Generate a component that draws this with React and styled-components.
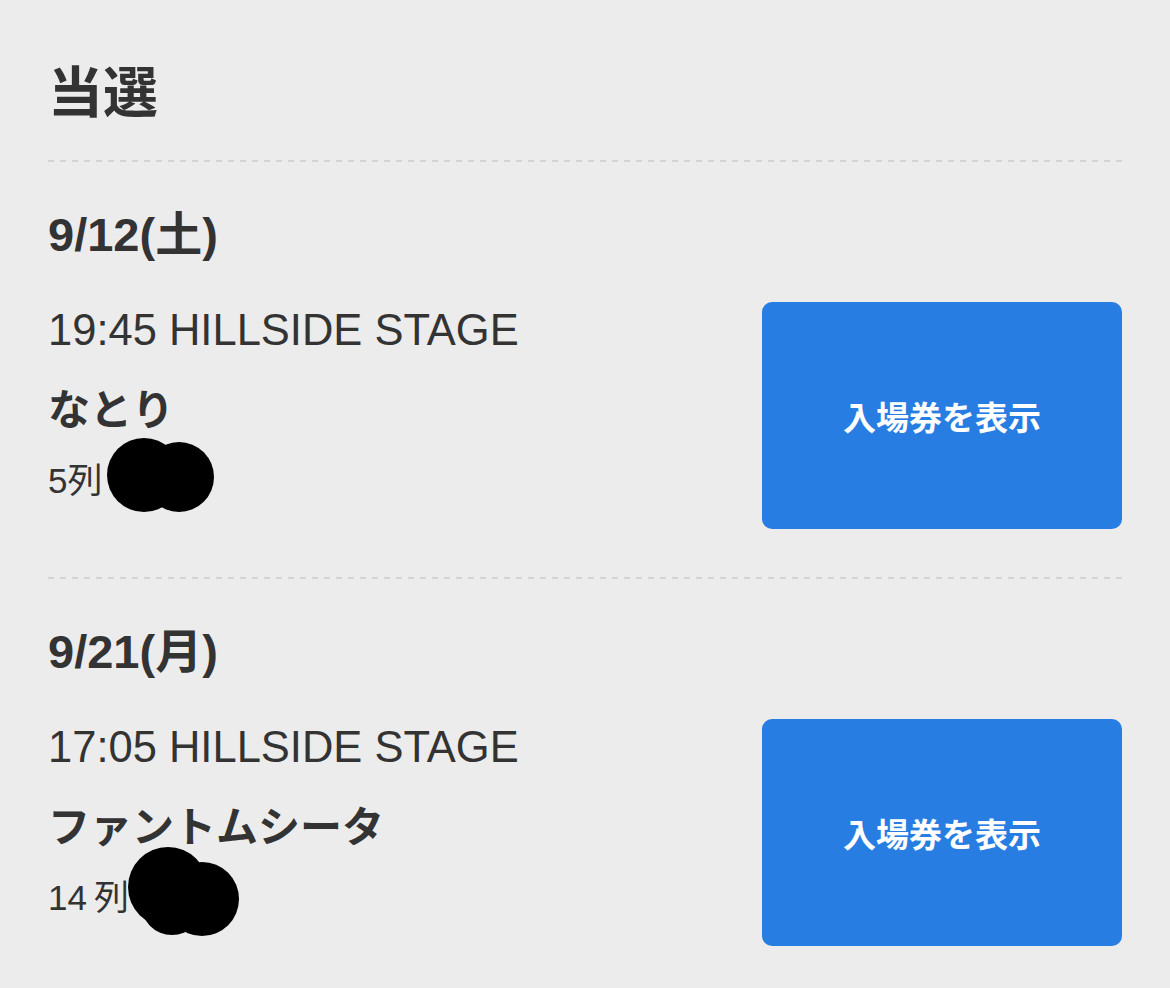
import React from "react";
import styled, { createGlobalStyle } from "styled-components";

const GlobalStyle = createGlobalStyle`
  html, body {
    margin: 0;
    padding: 0;
    background: #ececec;
  }
  body {
    font-family: "Liberation Sans", "Noto Sans CJK JP", sans-serif;
    color: #333333;
  }
`

const Page = styled.main`
  padding: 58px 48px 0;
  min-height: 988px;
  box-sizing: border-box;
`

const Title = styled.h1`
  margin: 0 0 42px;
  font-family: "Noto Sans CJK JP", sans-serif;
  font-size: 55px;
  line-height: 60px;
  font-weight: 700;
`

const Divider = styled.hr`
  margin: 0;
  border: 0;
  height: 2px;
  background: repeating-linear-gradient(to right, #d3d3d3 0 6px, transparent 6px 12px);
`

const Section = styled.section`
  padding: 45px 0 48px;
`

const DateLabel = styled.h2`
  margin: 0 0 39px;
  font-family: "Liberation Sans", "Noto Sans CJK JP", sans-serif;
  font-size: 47px;
  line-height: 56px;
  font-weight: 700;
`

const Row = styled.div`
  display: flex;
  justify-content: space-between;
  align-items: flex-start;
`

const Info = styled.div`
  display: flex;
  flex-direction: column;
`

const Time = styled.div`
  font-size: 43.5px;
  line-height: 56px;
`

const Artist = styled.div`
  margin-top: 21px;
  font-family: "Noto Sans CJK JP", sans-serif;
  font-size: 42px;
  line-height: 56px;
  font-weight: 700;
`

const Seat = styled.div`
  margin-top: 17px;
  display: flex;
  align-items: center;
  height: 50px;
  font-family: "Liberation Sans", "Noto Sans CJK JP", sans-serif;
  font-size: 35px;

  svg {
    flex-shrink: 0;
    overflow: visible;
    margin-left: ${p => p.$gap}px;
    margin-top: -4px;
  }
`

const TicketButton = styled.button`
  width: 360px;
  height: 227px;
  border: 0;
  border-radius: 10px;
  background: #287de3;
  color: #ffffff;
  font-family: "Noto Sans CJK JP", sans-serif;
  font-size: 33px;
  font-weight: 700;
  cursor: pointer;
`

// redaction marks drawn over the seat number
const Blob = ({ circles, w, h }) => (
  <svg width={w} height={h} viewBox={`0 0 ${w} ${h}`}>
    {circles.map(([cx, cy, r], i) => (
      <circle key={i} cx={cx} cy={cy} r={r} fill="#000" />
    ))}
  </svg>
)

const tickets = [
  {
    date: "9/12(土)",
    time: "19:45 HILLSIDE STAGE",
    artist: "なとり",
    seat: "5列",
    gap: 5,
    blob: { w: 108, h: 75, circles: [[37, 37, 37], [72, 39, 35]] },
  },
  {
    date: "9/21(月)",
    time: "17:05 HILLSIDE STAGE",
    artist: "ファントムシータ",
    seat: "14\u2009列",
    gap: -2,
    blob: { w: 112, h: 87, circles: [[41, 38, 40], [75, 50, 37], [45, 55, 31]] },
  },
]

const App = () => {
  return (
    <Page>
      <GlobalStyle />
      <Title>当選</Title>
      {tickets.map((t, index) => (
        <React.Fragment key={index}>
          <Divider />
          <Section>
            <DateLabel>{t.date}</DateLabel>
            <Row>
              <Info>
                <Time>{t.time}</Time>
                <Artist>{t.artist}</Artist>
                <Seat $gap={t.gap}>
                  {t.seat}
                  <Blob {...t.blob} />
                </Seat>
              </Info>
              <TicketButton>入場券を表示</TicketButton>
            </Row>
          </Section>
        </React.Fragment>
      ))}
    </Page>
  )
}

export default App
